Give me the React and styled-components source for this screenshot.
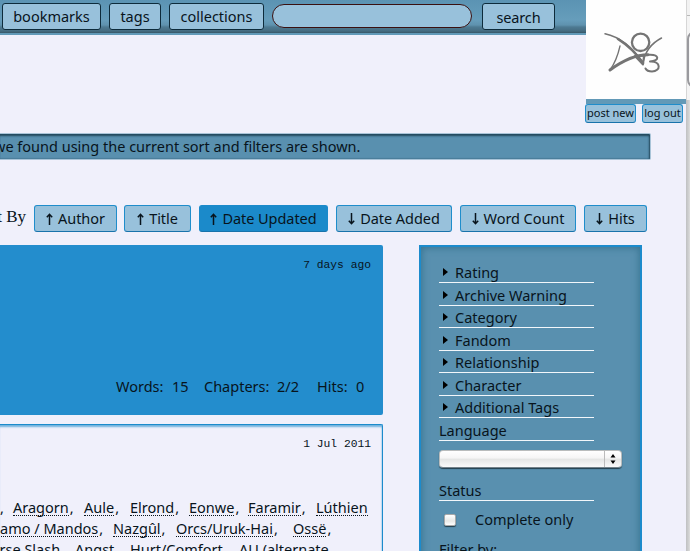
import React from "react";
import styled, { createGlobalStyle, css } from "styled-components";

const Global = createGlobalStyle`
  * { box-sizing: border-box; }
  html, body { margin: 0; overflow: hidden; background: #f0f0fb; }
`;

const Screen = styled.div`
  position: relative;
  width: 690px;
  height: 551px;
  overflow: hidden;
  display: grid;
  grid-template-columns: 686px 4px;
  background: #f0f0fb;
  color: #08141c;
  font: 14.5px/20px "Noto Sans", sans-serif;
  white-space: nowrap;
`;

const Page = styled.div`
  min-width: 0;
  height: 551px;
  overflow: hidden;
`;

const WindowEdge = styled.div`
  height: 551px;
  background: linear-gradient(90deg, #bfc0c2, #cfd0d0 60%, #dedede);
`;

const Label = styled.span`
  letter-spacing: ${(p) => p.$ls || 0}px;
  white-space: pre;
`;

const Header = styled.header`
  width: 586px;
  height: 35px;
  padding: 3px 0 0 2px;
  display: flex;
  align-items: flex-start;
  background: linear-gradient(#5b93b3 0, #669dbb 20px, #5f92ae 25px, #4d7a92 27px, #456c80 31px, #375767 33px, #629ab8 33px);
`;

const Button = styled.button`
  width: ${(p) => p.$w}px;
  height: 27px;
  margin: 0 ${(p) => p.$gap || 0}px 0 0;
  padding: 0 0 ${(p) => (p.$low ? 0 : 2)}px;
  flex: none;
  display: flex;
  align-items: center;
  justify-content: center;
  font: inherit;
  color: #08141c;
  background: #98c1db;
  border: 1px solid #0d2b3b;
  border-radius: 3px;
`;

const SortButton = styled(Button)`
  border-color: ${(p) => (p.$on ? "#1b8aca" : "#1f8dcb")};
  border-bottom-color: #1873ab;
  ${(p) => p.$on && css`background: #1b8aca;`}
`;

const SortArrow = styled.svg`
  width: 7px;
  height: 12px;
  margin: 2px 5px 0 0;
  fill: none;
  stroke: #08141c;
  stroke-width: 1.5;
  ${(p) => p.$down && css`transform: rotate(180deg);`}
`;

const SmallButton = styled(SortButton)`
  height: 19px;
  font-size: 11px;
  line-height: 14px;
`;

const Search = styled.input`
  width: 200px;
  height: 24px;
  margin: 1px 10px 0 0;
  border: 1px solid #3a1010;
  border-radius: 12px;
  background: #98c1db;
`;

const Notice = styled.div`
  width: 651px;
  height: 27px;
  margin-top: 98px;
  padding-bottom: 2px;
  display: flex;
  align-items: center;
  text-indent: -6px;
  background: #5990af;
  border: 1px solid #a9c4d8;
  border-left: 0;
  border-radius: 0 2px 2px 0;
  box-shadow: inset -1px 2px 2px #22495d, inset 0 -1px 1px #4a7d9a;
`;

const SortBar = styled.div`
  height: 27px;
  margin-top: 45px;
  display: flex;
`;

const SortTitle = styled.span`
  width: 34px;
  display: flex;
  justify-content: flex-end;
  padding-right: 8px;
  font: 17px/24px "Liberation Serif", serif;
`;

const Columns = styled.main`
  margin-top: 13px;
  display: grid;
  grid-template-columns: 383px 223px;
  column-gap: 36px;
  align-items: start;
`;

const Feed = styled.div`
  display: grid;
  grid-template-rows: 170px 200px;
  row-gap: 9px;
`;

const Work = styled.article`
  overflow: hidden;
  border-radius: 0 2px 2px 0;
  display: flex;
  flex-direction: column;
  ${(p) => p.$own
    ? css`background: #238dcd; padding: 10px 12px 0 0;`
    : css`border: solid #1c8bcc; border-width: 1px 1px 0 0; padding: 9px 11px 0 0;
        box-shadow: inset 0 3px 2px -1px #6fb1de, inset -1px 0 1px #c5dcf0;`}
`;

const PostDate = styled.time`
  align-self: flex-end;
  font: 11.3px/20px "Liberation Mono", monospace;
`;

const Stats = styled.div`
  display: flex;
  margin-top: 101px;
  padding-left: 116px;
`;

const Stat = styled.span`
  width: ${(p) => p.$w}px;
`;

const Tags = styled.div`
  margin-top: 43px;
`;

const TagLine = styled.div`
  height: 21px;
  display: flex;
  align-items: flex-start;
  margin-left: ${(p) => p.$x || 0}px;
`;

const TagSlot = styled.span`
  width: ${(p) => p.$w}px;
  flex: none;
`;

const Tag = styled.a`
  display: inline-block;
  height: 19px;
  line-height: 20px;
  margin-right: 1px;
  border-bottom: 1px dotted #08141c;
`;

const Sidebar = styled.aside`
  height: 320px;
  padding: 17px 18px 0;
  background: #5990af;
  border: 2px solid #1c8bcc;
  box-shadow: inset 0 0 7px 1px #387592;
`;

const Facet = styled.div`
  width: 155px;
  height: ${(p) => p.$h || 22.5}px;
  display: flex;
  align-items: flex-end;
  line-height: 19px;
  border-bottom: 1px solid #f3f7fb;
`;

const Arrow = styled.span`
  margin: 0 7px 6px 4px;
  border-left: 5px solid #000;
  border-top: 4px solid transparent;
  border-bottom: 4px solid transparent;
`;

const Select = styled.div`
  width: 183px;
  height: 18px;
  margin-top: 9px;
  display: flex;
  justify-content: flex-end;
  border-radius: 4px;
  border: 1px solid #b9bcbc;
  border-bottom-color: #74828a;
  background: linear-gradient(#fff, #f5f5f5 45%, #e4e5e4 50%, #fafafa);
  box-shadow: 0 1px 1px #223d4b;
`;

const Stepper = styled.span`
  width: 17px;
  border-left: 1px solid #bbb;
  display: flex;
  align-items: center;
  justify-content: center;
`;

const Check = styled.span`
  width: 12px;
  height: 12px;
  margin: 2px 19px 0 5px;
  background: linear-gradient(#fff, #e8e8e6 60%, #fff);
  border: 1px solid #a9a9a9;
  border-radius: 2px;
  box-shadow: 0 1px 1px #223d4b;
`;

const CheckRow = styled.label`
  height: 38px;
  padding-bottom: 1px;
  display: flex;
  align-items: center;
`;

const Account = styled.div`
  position: absolute;
  left: 585px;
  top: 0;
  width: 101px;
`;

const LogoPanel = styled.div`
  height: 104px;
  margin-left: 1px;
  background: #fefefe;
  border-bottom: 5px solid #6299b7;
`;

const AccountLinks = styled.div`
  display: flex;
`;

const BackWindow = styled.div`
  position: absolute;
  left: 686px;
  top: 0;
  width: 4px;
  height: 100px;
  padding-top: 15px;
  overflow: hidden;
  background: linear-gradient(#f2f2f2 15px, #b9b9b9 15px, #b9b9b9 16px, #f4f4f4 16px);
  border-left: 1px solid #d6d6d6;
`;

const BackScroll = styled.div`
  width: 20px;
  height: 57px;
  margin-top: 16px;
  border: 2px solid #9a9a9e;
  border-radius: 8px;
  background: #f7f7f7;
`;

const facets = ["Rating", "Archive Warning", "Category", "Fandom", "Relationship", "Character", "Additional Tags"];

const sorts = [
  { name: "Author", w: 83, gap: 7 },
  { name: "Title", w: 67, gap: 8 },
  { name: "Date Updated", w: 129, gap: 8, on: true },
  { name: "Date Added", w: 116, gap: 8, down: true },
  { name: "Word Count", w: 116, gap: 8, down: true },
  { name: "Hits", w: 63, gap: 0, down: true },
];

const tagsA = [["Aragorn", 71], ["Aule", 46], ["Elrond", 59], ["Eonwe", 59], ["Faramir", 68], ["Lúthien", 60]];
const tagsB = [["Namo / Mandos", 124], ["Nazgûl", 63], ["Orcs/Uruk-Hai", 117], ["Ossë", 50]];
const tagsC = [["Horse Slash", 95], ["Angst", 55], ["Hurt/Comfort", 109], ["AU (alternate", 110]];

function TagList({ items, last }) {
  return items.map(([name, w], i) => (
    <TagSlot key={name} $w={w}>
      <Tag>{name}</Tag>
      {last && i === items.length - 1 ? "" : ","}
    </TagSlot>
  ));
}

function Logo() {
  return (
    <svg width="100" height="99" viewBox="586 0 100 99" fill="none" stroke="#747474" strokeLinecap="round" strokeLinejoin="round">
      <circle cx="640.6" cy="42.3" r="8.7" strokeWidth="2.3" />
      <path d="M605 33.8C620 37 633 48 643 63" strokeWidth="1.5" />
      <path d="M618 39C629 46 636 53 643 63" strokeWidth="2.6" />
      <path d="M661.5 38C652 43 645 51 643 63" strokeWidth="1.5" />
      <path d="M620 46C618 55 615 63 610 70" strokeWidth="1.3" />
      <path d="M610 70C621 62 634 54.7 648 54.8" strokeWidth="3" />
      <path d="M635 56L643 64.5L644 55.5Z" strokeWidth="2" />
      <path d="M648 54.8C660 54 660 61 650 61.5C661.5 61 661 71.5 652 71.5C649 71.5 646.5 70.5 645.5 68.5" strokeWidth="2" />
    </svg>
  );
}

export default function App() {
  return (
    <Screen>
      <Global />
      <Page>
        <Header>
          <Button $w={99} $gap={8}><Label>bookmarks</Label></Button>
          <Button $w={52} $gap={8}><Label>tags</Label></Button>
          <Button $w={95} $gap={8}><Label>collections</Label></Button>
          <Search aria-label="search" />
          <Button $w={73} $low><Label $ls={-0.15}>search</Label></Button>
        </Header>
        <Notice><Label>we found using the current sort and filters are shown.</Label></Notice>
        <SortBar>
          <SortTitle>Sort By</SortTitle>
          {sorts.map(({ name, w, gap, on, down }) => (
            <SortButton key={name} $w={w} $gap={gap} $on={on}>
              <SortArrow viewBox="0 0 7 12" $down={down}><path d="M3.5 12V1.5M.8 4.2L3.5 1.3L6.2 4.2" /></SortArrow>
              <Label $ls={-0.05}>{name}</Label>
            </SortButton>
          ))}
        </SortBar>
        <Columns>
          <Feed>
            <Work $own>
              <PostDate>7 days ago</PostDate>
              <Stats>
                <Stat $w={56}>Words:</Stat><Stat $w={32}>15</Stat>
                <Stat $w={73}>Chapters:</Stat><Stat $w={40}>2/2</Stat>
                <Stat $w={39}>Hits:</Stat><Stat $w={10}>0</Stat>
              </Stats>
            </Work>
            <Work>
              <PostDate>1 Jul 2011</PostDate>
              <Tags>
                <TagLine><TagSlot $w={13}>,</TagSlot><TagList items={tagsA} last /></TagLine>
                <TagLine $x={-11}><TagList items={tagsB} /></TagLine>
                <TagLine $x={-20}><TagList items={tagsC} last /></TagLine>
              </Tags>
            </Work>
          </Feed>
          <Sidebar>
            {facets.map((name, i) => (
              <Facet key={name} $h={i ? 22.5 : 19}><Arrow /><Label>{name}</Label></Facet>
            ))}
            <Facet><Label>Language</Label></Facet>
            <Select>
              <Stepper>
                <svg width="6" height="12" viewBox="0 0 6 12"><path d="M3 1L5.5 4.5H.5zM3 11L5.5 7.5H.5z" /></svg>
              </Stepper>
            </Select>
            <Facet $h={33}><Label>Status</Label></Facet>
            <CheckRow><Check /><Label>Complete only</Label></CheckRow>
            <Label>Filter by:</Label>
          </Sidebar>
        </Columns>
      </Page>
      <WindowEdge />
      <BackWindow><BackScroll /></BackWindow>
      <Account>
        <LogoPanel><Logo /></LogoPanel>
        <AccountLinks>
          <SmallButton $w={51} $gap={6}>post new</SmallButton>
          <SmallButton $w={41}>log out</SmallButton>
        </AccountLinks>
      </Account>
    </Screen>
  );
}
